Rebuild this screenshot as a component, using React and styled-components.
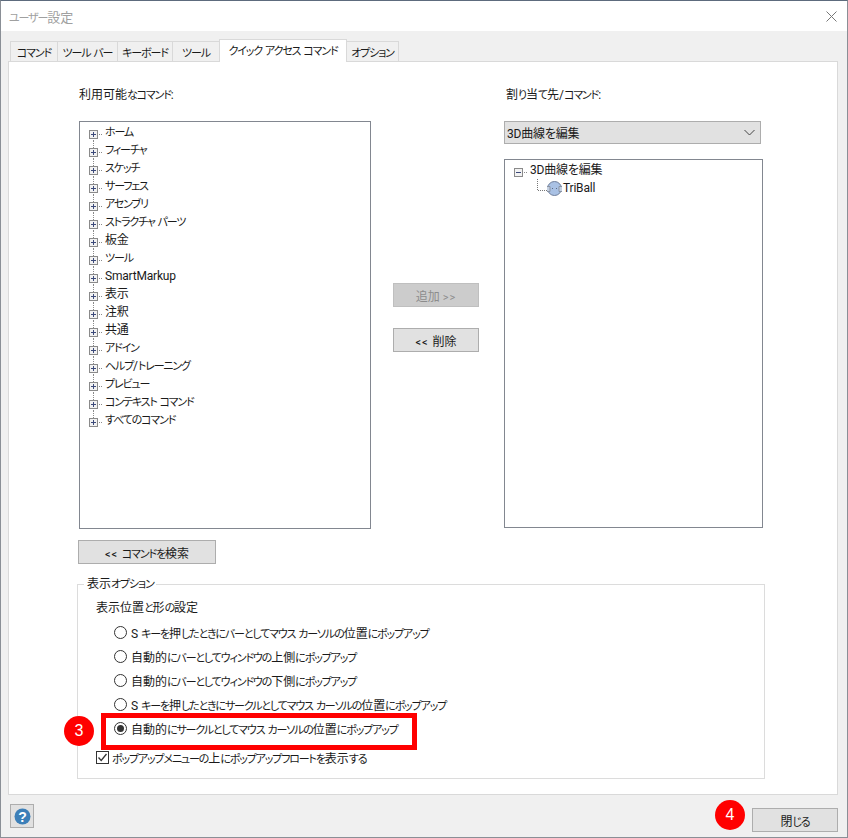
import React from "react";
import styled, { createGlobalStyle } from "styled-components";

const Global = createGlobalStyle`
html, body { margin: 0; padding: 0; background: #f0f0f0; }
body {
  font-family: Roboto, "Noto Sans CJK JP", sans-serif;
  font-size: 12px;
  font-feature-settings: "palt";
  color: #1a1a1a;
}
`
const Dialog = styled.div`
position: relative;
width: 848px;
height: 838px;
box-sizing: border-box;
background: #f0f0f0;
border: 1px solid #8a8f96;
border-top-color: #5d6b7d;
overflow: hidden;
`
const TitleBar = styled.div`
height: 30px;
background: #fff;
display: flex;
align-items: center;
justify-content: space-between;
padding: 0 10px 0 8px;
font-size: 13px;
color: #a0a0a0;
`
const TabRow = styled.div`
height: 30px;
display: flex;
align-items: flex-end;
padding-left: 10px;
`
const Tab = styled.div`
box-sizing: border-box;
position: relative;
z-index: ${p => (p.$active ? 1 : 0)};
width: ${p => p.$w}px;
height: ${p => (p.$active ? 23 : 20)}px;
margin-bottom: ${p => (p.$active ? -1 : 0)}px;
margin-left: -1px;
padding-bottom: ${p => (p.$active ? 3 : 0)}px;
display: flex;
align-items: center;
justify-content: center;
background: ${p => (p.$active ? "#fff" : "#f0f0f0")};
border: 1px solid #d9d9d9;
border-bottom: none;
`
const Panel = styled.div`
box-sizing: border-box;
width: 830px;
height: 734px;
margin-left: 7px;
background: #fff;
border: 1px solid #d9d9d9;
padding-left: 68px;
display: flex;
flex-direction: column;
`
const Columns = styled.div`
display: flex;
flex: none;
`
const Left = styled.div`
width: 314px;
display: flex;
flex-direction: column;
padding-left: 2px;
`
const Middle = styled.div`
width: 86px;
display: flex;
flex-direction: column;
padding-top: 221px;
gap: 21px;
`
const Right = styled.div`
margin-left: 25px;
width: 259px;
display: flex;
flex-direction: column;
`
const Label = styled.div`
flex: none;
height: 59px;
line-height: 20px;
padding: 23px 0 0 ${p => p.$pl || 0}px;
box-sizing: border-box;
white-space: nowrap;
`
const TreeBox = styled.div`
flex: none;
box-sizing: border-box;
width: ${p => p.$w}px;
height: ${p => p.$h}px;
margin-top: ${p => p.$mt || 0}px;
border: 1px solid #828790;
background: #fff;
padding: 1px 0 0 9px;
`
const TreeRow = styled.div`
height: 18px;
display: flex;
align-items: center;
white-space: nowrap;
letter-spacing: -0.2px;
`
const TreeText = styled.span`
margin-left: 1px;
line-height: 18px;
`
const Expander = styled.svg`
width: 15px;
height: 18px;
flex: none;
`
const Combo = styled.div`
flex: none;
box-sizing: border-box;
width: 257px;
height: 23px;
border: 1px solid #adadad;
background: #e1e1e1;
display: flex;
align-items: center;
justify-content: space-between;
padding: 0 5px 0 2px;
letter-spacing: -0.2px;
`
const Button = styled.div`
flex: none;
box-sizing: border-box;
width: ${p => p.$w}px;
height: 24px;
border: 1px solid ${p => (p.$disabled ? "#bfbfbf" : "#adadad")};
background: ${p => (p.$disabled ? "#cccccc" : "#e1e1e1")};
color: ${p => (p.$disabled ? "#8c8c8c" : "#1a1a1a")};
display: flex;
align-items: center;
justify-content: center;
white-space: pre;
`
const FindButton = styled(Button)`
margin-top: 11px;
margin-left: -1px;
`
const Group = styled.fieldset`
flex: none;
box-sizing: border-box;
width: 688px;
height: 202px;
margin: 13px 0 0 0;
padding: 0 0 0 18px;
border: 1px solid #dcdcdc;
min-inline-size: 0;
`
const Legend = styled.legend`
padding: 0 2px 0 3px;
margin-left: -12px;
line-height: 14px;
`
const GroupTitle = styled.div`
height: 24px;
line-height: 24px;
margin-top: 4px;
`
const Choice = styled.div`
height: 24px;
display: flex;
align-items: center;
padding-left: 18px;
gap: 4px;
white-space: pre;
`
const Radio = styled.span`
box-sizing: border-box;
width: 13px;
height: 13px;
border: 1px solid #333;
border-radius: 50%;
background: #fff;
display: flex;
align-items: center;
justify-content: center;
flex: none;
&::after {
  content: "";
  display: ${p => (p.$on ? "block" : "none")};
  width: 7px;
  height: 7px;
  border-radius: 50%;
  background: #333;
}
`
const CheckRow = styled.div`
height: 20px;
margin-top: 7px;
display: flex;
align-items: center;
gap: 3px;
white-space: nowrap;
`
const CheckBox = styled.svg`
width: 13px;
height: 13px;
flex: none;
`
const Footer = styled.div`
height: 42px;
display: flex;
align-items: center;
justify-content: space-between;
padding: 0 9px;
`
const HelpButton = styled.div`
box-sizing: border-box;
width: 24px;
height: 24px;
background: #e1e1e1;
border: 1px solid #adadad;
display: flex;
align-items: center;
justify-content: center;
`
const CloseButton = styled(Button)`
margin-top: 8px;
`
const Highlight = styled.div`
position: absolute;
left: 100px;
top: 712px;
width: 316px;
height: 37px;
box-sizing: border-box;
border: 5px solid #ff0000;
`
const Badge = styled.div`
position: absolute;
left: ${p => p.$x}px;
top: ${p => p.$y}px;
width: 30px;
height: 30px;
border-radius: 50%;
background: #ff0000;
color: #fff;
font-family: "Liberation Sans", sans-serif;
font-size: 16px;
display: flex;
align-items: center;
justify-content: center;
`
const Kana = styled.span`
font-size: 11px;
letter-spacing: -1.15px;
`
const Spacer = styled.span`
width: 23px;
flex: none;
`
const Arrows = styled.span`
letter-spacing: 1px;
font-size: 11px;
`

const tabs = [
  ["コマンド", 48], ["ツール バー", 61], ["キーボード", 56], ["ツール", 48],
  ["クイック アクセス コマンド", 128], ["オプション", 53],
]
const commands = [
  "ホーム", "フィーチャ", "スケッチ", "サーフェス", "アセンブリ", "ストラクチャ パーツ", "板金", "ツール",
  "SmartMarkup", "表示", "注釈", "共通", "アドイン", "ヘルプ/トレーニング", "プレビュー", "コンテキスト コマンド", "すべてのコマンド",
]
const options = [
  "S キーを押したときにバーとしてマウス カーソルの位置にポップアップ",
  "自動的にバーとしてウィンドウの上側にポップアップ",
  "自動的にバーとしてウィンドウの下側にポップアップ",
  "S キーを押したときにサークルとしてマウス カーソルの位置にポップアップ",
  "自動的にサークルとしてマウス カーソルの位置にポップアップ",
]

// the original UI font has condensed kana, so kana runs get tightened
const Jp = ({ text }) => text.split(/([\u3040-\u30ff]+)/).map((part, i) =>
  i % 2 ? <Kana key={i}>{part}</Kana> : part
)

const ExpandIcon = ({ first, last, minus }) => (
  <Expander viewBox="0 0 15 18">
    <g stroke="#8a8a8a" strokeWidth="1" strokeDasharray="1 1" fill="none">
      {!first && <path d="M4.5 0V7" />}
      {!last && <path d="M4.5 15V18" />}
      <path d="M10 11.5H14" />
    </g>
    <rect x="0.5" y="7.5" width="8" height="8" fill="#f2f2f2" stroke="#8a8a8a" />
    <path d="M2 11.5H7" stroke="#3c4a7a" />
    {!minus && <path d="M4.5 9V14" stroke="#3c4a7a" />}
  </Expander>
)

const TriBallIcon = () => (
  <svg width="26" height="18" viewBox="0 0 26 18" style={{ flex: "none" }}>
    <path d="M0.5 0V11.5H10" stroke="#777" strokeDasharray="1 1" fill="none" />
    <circle cx="17.5" cy="9.5" r="7" fill="#a9c1e4" stroke="#6f7f9c" />
    <path d="M10 7.5h3v5h-3M25 7.5h-3v5h3" fill="#c4d0e2" stroke="#8a93a3" />
    <path d="M15.5 9v1M19.5 9v1" stroke="#5d6b85" />
  </svg>
)

const App = () => {
  return (
    <Dialog>
      <Global />
      <TitleBar>
        <span><Jp text="ユーザー設定" /></span>
        <svg width="11" height="11" viewBox="0 0 11 11"><path d="M0.5 0.5L10.5 10.5M10.5 0.5L0.5 10.5" stroke="#777" fill="none" /></svg>
      </TitleBar>
      <TabRow>
        {tabs.map(([t, w], i) => <Tab key={t} $w={w} $active={i === 4}><span><Jp text={t} /></span></Tab>)}
      </TabRow>
      <Panel>
        <Columns>
          <Left>
            <Label><Jp text="利用可能なコマンド:" /></Label>
            <TreeBox $w={292} $h={408}>
              {commands.map((c, i) => (
                <TreeRow key={c}>
                  <ExpandIcon first={i === 0} last={i === commands.length - 1} />
                  <TreeText><Jp text={c} /></TreeText>
                </TreeRow>
              ))}
            </TreeBox>
            <FindButton $w={138}><span><Arrows>{"<< "}</Arrows><Jp text="コマンドを検索" /></span></FindButton>
          </Left>
          <Middle>
            <Button $w={86} $disabled><span>追加 <Arrows>&gt;&gt;</Arrows></span></Button>
            <Button $w={86}><span><Arrows>{"<< "}</Arrows>削除</span></Button>
          </Middle>
          <Right>
            <Label $pl={2}><Jp text="割り当て先/コマンド:" /></Label>
            <Combo>
              <span>3D曲線を編集</span>
              <svg width="11" height="7" viewBox="0 0 11 7"><path d="M0.5 1L5.5 6L10.5 1" stroke="#444" fill="none" /></svg>
            </Combo>
            <TreeBox $w={259} $h={369} $mt={15}>
              <TreeRow>
                <ExpandIcon first last minus />
                <TreeText>3D曲線を編集</TreeText>
              </TreeRow>
              <TreeRow>
                <Spacer />
                <TriBallIcon />
                <span>TriBall</span>
              </TreeRow>
            </TreeBox>
          </Right>
        </Columns>
        <Group>
          <Legend><Jp text="表示オプション" /></Legend>
          <GroupTitle><Jp text="表示位置と形の設定" /></GroupTitle>
          {options.map((o, i) => (
            <Choice key={o}><Radio $on={i === 4} /><span><Jp text={o} /></span></Choice>
          ))}
          <CheckRow>
            <CheckBox viewBox="0 0 13 13">
              <rect x="0.5" y="0.5" width="12" height="12" fill="#fff" stroke="#333" />
              <path d="M2.5 6.5L5.2 9.5L10.5 3" stroke="#333" strokeWidth="1.3" fill="none" />
            </CheckBox>
            <span><Jp text="ポップアップメニューの上にポップアップフロートを表示する" /></span>
          </CheckRow>
        </Group>
      </Panel>
      <Footer>
        <HelpButton>
          <svg width="17" height="17" viewBox="0 0 17 17">
            <circle cx="8.5" cy="8.5" r="8" fill="#3c7fb8" />
            <text x="8.5" y="13.5" textAnchor="middle" fontFamily="Liberation Sans" fontWeight="700" fontSize="14" fill="#fff">?</text>
          </svg>
        </HelpButton>
        <CloseButton $w={86}><span>閉<Jp text="じる" /></span></CloseButton>
      </Footer>
      <Highlight />
      <Badge $x={63} $y={715}>3</Badge>
      <Badge $x={714} $y={799}>4</Badge>
    </Dialog>
  );
}

export default App;
